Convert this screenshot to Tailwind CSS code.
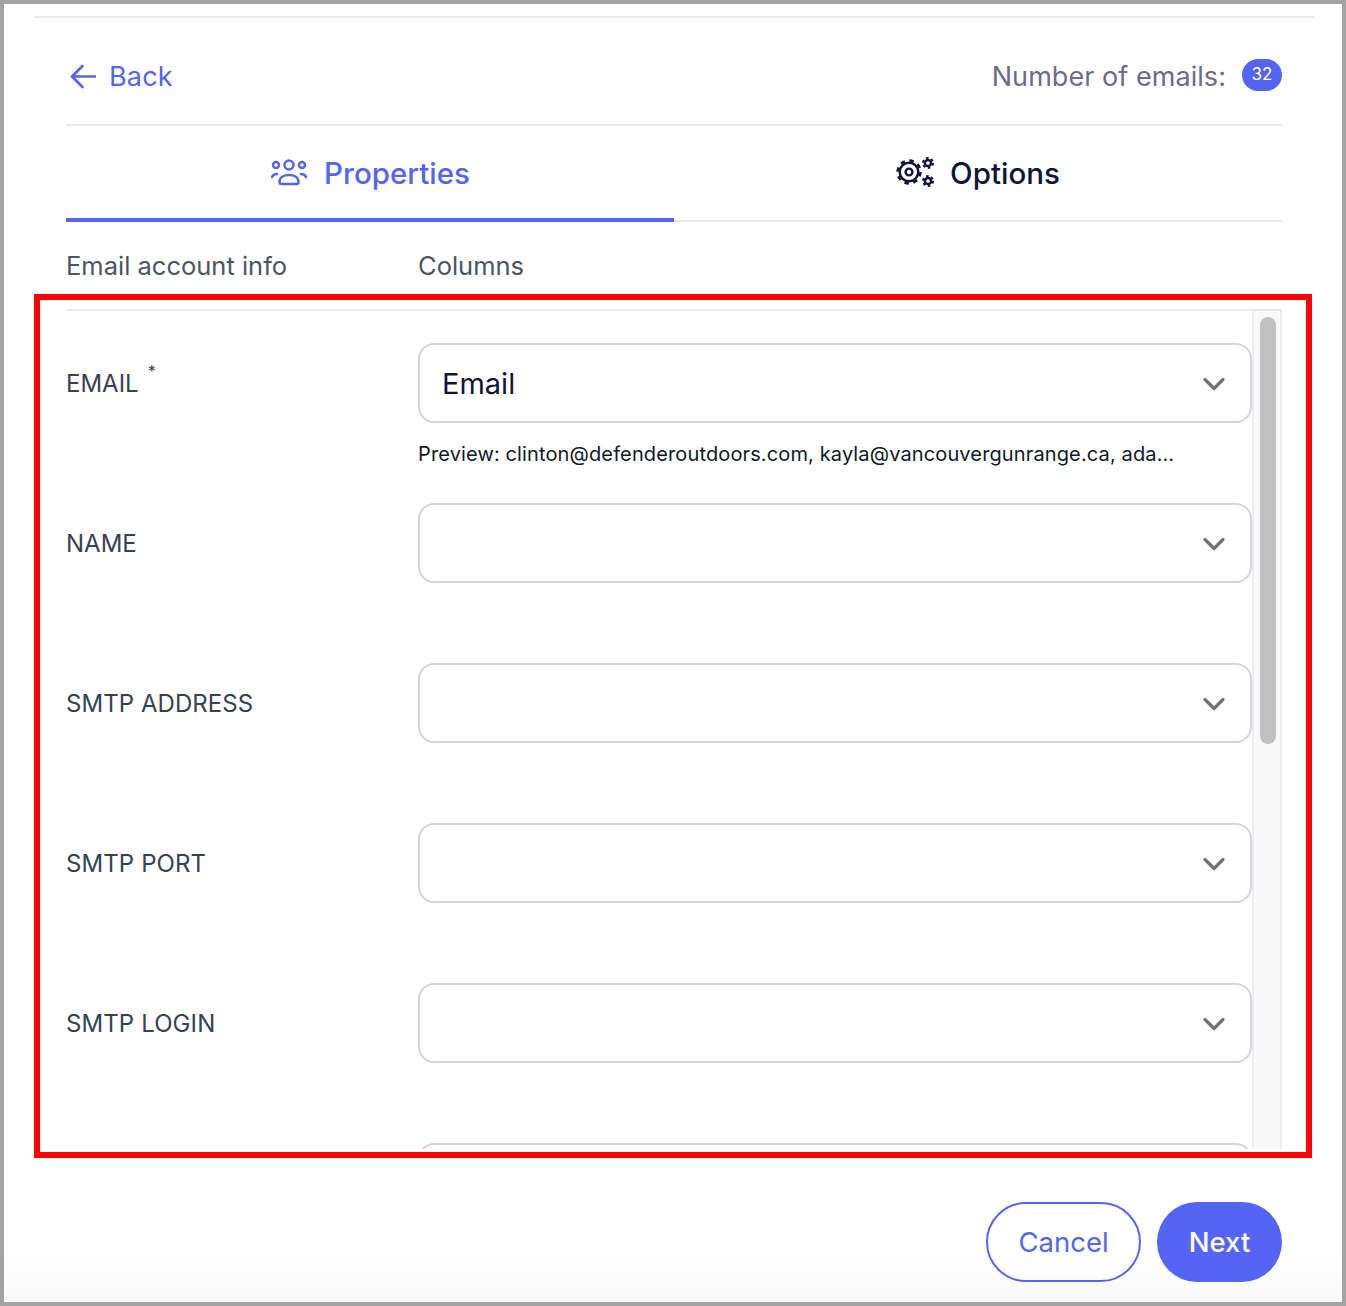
<!doctype html>
<html>
<head>
<meta charset="utf-8">
<script src="https://cdn.jsdelivr.net/npm/@tailwindcss/browser@4"></script>
</head>
<body class="bg-white">
<div class="relative w-[1346px] h-[1306px] overflow-hidden border-4 border-[#a3a3a3] bg-gradient-to-b from-white from-[96%] to-[#f9f9fa] font-['Inter','Liberation_Sans',sans-serif]">
  <div class="ml-[30px] mr-[28px] mt-[12px] h-[2px] bg-[#e7e7ed]"></div>
  <div class="ml-[62px] mr-[60px] flex flex-col">
    <div class="flex h-[108px] items-center justify-between border-b-2 border-[#e7e7ed] pt-[12px]">
      <div class="flex items-center gap-[13px] text-[#5465f6]">
        <svg class="ml-[4px] h-[26px] w-[26px]" viewBox="0 0 26 26" fill="none" stroke="currentColor" stroke-width="2.600" stroke-linecap="round" stroke-linejoin="round"><path d="M12.500 2 2 12.500 12.500 23M2.500 12.500H25"/></svg>
        <span class="text-[27px] leading-[32px] tracking-[0.2px]">Back</span>
      </div>
      <div class="flex items-center gap-[16px]">
        <span class="text-[27px] leading-[32px] tracking-[0.05px] text-[#6b6b8c]">Number of emails:</span>
        <span class="-mt-[4px] flex h-[32px] w-[40px] items-center justify-center rounded-full bg-[#5465f6] text-[17px] text-white">32</span>
      </div>
    </div>
    <div class="grid h-[96px] grid-cols-2">
      <div class="flex items-center justify-center gap-[16px] border-b-4 border-[#5465f6] pt-[2px] text-[#5465f6]">
        <svg class="-mt-[2px] h-[28px] w-[38px]" viewBox="0 0 38 28" fill="none" stroke="currentColor" stroke-width="2.500" stroke-linecap="round" stroke-linejoin="round">
          <circle cx="19" cy="7" r="4.500"/><circle cx="6" cy="7" r="3"/><circle cx="32" cy="7" r="3"/>
          <path d="M11.500 26h15a2 2 0 0 0 2-2c0-4.500-4-7-9.500-7s-9.500 2.500-9.500 7a2 2 0 0 0 2 2Z"/>
          <path d="M2 19c.7-2 2.400-3 5-3M36 19c-.7-2-2.400-3-5-3"/>
        </svg>
        <span class="text-[29.5px] leading-[36px] font-medium">Properties</span>
      </div>
      <div class="flex items-center justify-center gap-[16px] border-b-2 border-[#e7e7ed] text-[#10133a]">
        <svg class="-mt-[2px] h-[32px] w-[38px]" viewBox="0 0 38 32" fill="none" stroke="currentColor">
          <circle cx="13" cy="16" r="3.400" stroke-width="2.400"/>
          <circle cx="13" cy="16" r="9.300" stroke-width="2.500"/>
          <circle cx="13" cy="16" r="11.500" stroke-width="2.400" stroke-dasharray="4.500 4.530"/>
          <circle cx="32" cy="7" r="3.100" stroke-width="2.500"/>
          <circle cx="32" cy="7" r="5" stroke-width="2" stroke-dasharray="2.600 2.630"/>
          <circle cx="32" cy="25" r="3.100" stroke-width="2.500"/>
          <circle cx="32" cy="25" r="5" stroke-width="2" stroke-dasharray="2.600 2.630"/>
        </svg>
        <span class="text-[29.5px] leading-[36px] font-medium">Options</span>
      </div>
    </div>
    <div class="flex h-[89px] border-b-2 border-[#e7e7ed] pt-[28px] text-[25.500px] leading-[32px] text-[#4b5563]">
      <span class="w-[352px]">Email account info</span>
      <span>Columns</span>
    </div>
    <div class="flex h-[838px] overflow-hidden">
      <div class="flex-1 overflow-hidden pt-[32px]">
        <div class="flex h-[160px] items-start">
          <div class="w-[352px] pt-[26px] text-[24px] leading-[30px] text-[#374151]">EMAIL<sup class="ml-[9px] -top-[15px] text-[16px] leading-none">*</sup></div>
          <div class="w-[834px]">
            <div class="flex h-[80px] items-center justify-between rounded-[16px] border-2 border-[#d1d5db] pl-[22px] pr-[24px]">
              <span class="pt-[2px] text-[29px] leading-[36px] text-[#10133a]">Email</span>
              <svg class="h-[16px] w-[24px]" viewBox="0 0 24 16" fill="none" stroke="#6b7280" stroke-width="3.200" stroke-linecap="round" stroke-linejoin="round"><path d="M3 4.500 12 13.500 21 4.500"/></svg>
            </div>
            <p class="mt-[17px] whitespace-nowrap text-[20px] leading-[28px] tracking-[0.13px] text-[#111827]">Preview: clinton@defenderoutdoors.com, kayla@vancouvergunrange.ca, ada…</p>
          </div>
        </div>
        <div class="flex h-[160px] items-start">
          <div class="w-[352px] pt-[26px] text-[24px] leading-[30px] text-[#374151]">NAME</div>
          <div class="flex h-[80px] w-[834px] items-center justify-end rounded-[16px] border-2 border-[#d1d5db] pr-[24px]"><svg class="h-[16px] w-[24px]" viewBox="0 0 24 16" fill="none" stroke="#6b7280" stroke-width="3.200" stroke-linecap="round" stroke-linejoin="round"><path d="M3 4.500 12 13.500 21 4.500"/></svg></div>
        </div>
        <div class="flex h-[160px] items-start">
          <div class="w-[352px] pt-[26px] text-[24px] leading-[30px] tracking-[0.05px] text-[#374151]">SMTP ADDRESS</div>
          <div class="flex h-[80px] w-[834px] items-center justify-end rounded-[16px] border-2 border-[#d1d5db] pr-[24px]"><svg class="h-[16px] w-[24px]" viewBox="0 0 24 16" fill="none" stroke="#6b7280" stroke-width="3.200" stroke-linecap="round" stroke-linejoin="round"><path d="M3 4.500 12 13.500 21 4.500"/></svg></div>
        </div>
        <div class="flex h-[160px] items-start">
          <div class="w-[352px] pt-[26px] text-[24px] leading-[30px] tracking-[0.1px] text-[#374151]">SMTP PORT</div>
          <div class="flex h-[80px] w-[834px] items-center justify-end rounded-[16px] border-2 border-[#d1d5db] pr-[24px]"><svg class="h-[16px] w-[24px]" viewBox="0 0 24 16" fill="none" stroke="#6b7280" stroke-width="3.200" stroke-linecap="round" stroke-linejoin="round"><path d="M3 4.500 12 13.500 21 4.500"/></svg></div>
        </div>
        <div class="flex h-[160px] items-start">
          <div class="w-[352px] pt-[26px] text-[24px] leading-[30px] tracking-[0.1px] text-[#374151]">SMTP LOGIN</div>
          <div class="flex h-[80px] w-[834px] items-center justify-end rounded-[16px] border-2 border-[#d1d5db] pr-[24px]"><svg class="h-[16px] w-[24px]" viewBox="0 0 24 16" fill="none" stroke="#6b7280" stroke-width="3.200" stroke-linecap="round" stroke-linejoin="round"><path d="M3 4.500 12 13.500 21 4.500"/></svg></div>
        </div>
        <div class="flex h-[160px] items-start">
          <div class="w-[352px]"></div>
          <div class="h-[80px] w-[834px] rounded-[16px] border-2 border-[#d1d5db]"></div>
        </div>
      </div>
      <div class="h-full w-[30px] shrink-0 border-x-2 border-[#ececec] bg-[#f9f9f9] pl-[5px] pt-[6px]">
        <div class="ml-[1px] h-[427px] w-[16px] rounded-full bg-[#c1c1c1]"></div>
      </div>
    </div>
  </div>
  <div class="absolute left-[30px] top-[290px] h-[864px] w-[1278px] border-[6px] border-[#ff0000]"></div>
  <div class="absolute right-[60px] top-[1198px] flex gap-[16px]">
    <div class="flex h-[80px] w-[155px] items-center justify-center rounded-full border-2 border-[#5465f6] pt-[2px] text-[27.500px] text-[#5465f6]">Cancel</div>
    <div class="flex h-[80px] w-[125px] items-center justify-center rounded-full bg-[#5465f6] pt-[2px] text-[27.500px] font-medium text-white">Next</div>
  </div>
</div>
</body>
</html>
